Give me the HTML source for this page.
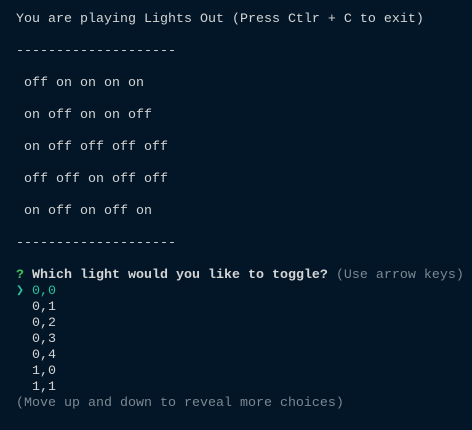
<!DOCTYPE html>
<html><head><style>
html,body{margin:0;padding:0;background:#021627;width:472px;height:430px;overflow:hidden}
pre{margin:0;position:absolute;left:16px;top:12px;font-family:"Liberation Mono",monospace;font-size:13.33px;line-height:16px;color:#d4d4d4}
.g{color:#3fc35c;font-weight:bold}
.b{font-weight:bold}
.c{color:#2bbf9e}
.d{color:#7c8791}
</style></head><body>
<pre>You are playing Lights Out (Press Ctlr + C to exit)

--------------------

 off on on on on

 on off on on off

 on off off off off

 off off on off off

 on off on off on

--------------------

<span class="g">?</span> <span class="b">Which light would you like to toggle?</span> <span class="d">(Use arrow keys)</span>
<span class="c">❯ 0,0</span>
  0,1
  0,2
  0,3
  0,4
  1,0
  1,1
<span class="d">(Move up and down to reveal more choices)</span></pre>
</body></html>
